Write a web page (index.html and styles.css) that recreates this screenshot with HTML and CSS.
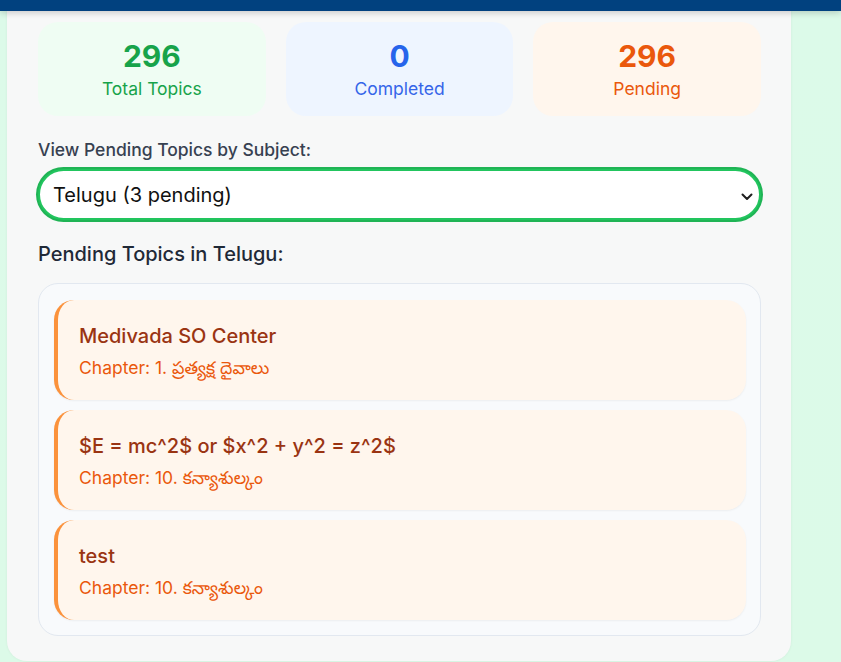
FILE: index.html
```html
<!DOCTYPE html>
<html lang="en">
<head>
<meta charset="utf-8">
<title>Pending Topics</title>
<link rel="stylesheet" href="styles.css">
</head>
<body>
<header class="topbar"></header>
<main class="panel">
  <section class="stats">
    <div class="stat stat-total">
      <div class="stat-num">296</div>
      <div class="stat-label">Total Topics</div>
    </div>
    <div class="stat stat-done">
      <div class="stat-num">0</div>
      <div class="stat-label">Completed</div>
    </div>
    <div class="stat stat-pending">
      <div class="stat-num">296</div>
      <div class="stat-label">Pending</div>
    </div>
  </section>

  <label class="field-label" for="subject">View Pending Topics by Subject:</label>
  <div class="select-wrap">
    <select id="subject" class="subject-select">
      <option>Telugu (3 pending)</option>
    </select>
    <svg class="chevron" width="12" height="8" viewBox="0 0 12 8"><path d="M1.5 1.5 L6 6 L10.5 1.5" fill="none" stroke="#1f1f1f" stroke-width="2" stroke-linecap="round" stroke-linejoin="round"/></svg>
  </div>

  <h2 class="section-title">Pending Topics in Telugu:</h2>

  <div class="topic-list">
    <div class="topic">
      <div class="topic-title">Medivada SO Center</div>
      <div class="topic-chapter">Chapter: 1. ప్రత్యక్ష దైవాలు</div>
    </div>
    <div class="topic">
      <div class="topic-title">$E = mc^2$ or $x^2 + y^2 = z^2$</div>
      <div class="topic-chapter">Chapter: 10. కన్యాశుల్కం</div>
    </div>
    <div class="topic">
      <div class="topic-title">test</div>
      <div class="topic-chapter">Chapter: 10. కన్యాశుల్కం</div>
    </div>
  </div>
</main>
</body>
</html>
```

FILE: styles.css
```css
* { box-sizing: border-box; }

html, body {
  margin: 0;
  padding: 0;
}

body {
  font-family: Inter, "Noto Sans", "Noto Sans Telugu", sans-serif;
  background: linear-gradient(180deg, #dcfae9 0%, #dcfae8 100%);
  min-height: 662px;
  overflow: hidden;
}

.topbar {
  height: 11px;
  background: #01417f;
  box-shadow: 0 2px 6px rgba(0, 0, 0, 0.18);
  position: relative;
  z-index: 2;
}

.panel {
  margin-left: 7px;
  width: 784px;
  background: #f7f8f8;
  border-radius: 0 0 20px 20px;
  padding: 11px 30px 25px 31px;
  box-shadow: 0 0 3px rgba(0, 0, 0, 0.06);
}

.stats {
  display: grid;
  grid-template-columns: repeat(3, 1fr);
  gap: 20px;
}

.stat {
  border-radius: 20px;
  padding: 16px 10px 15px;
  text-align: center;
  display: flex;
  flex-direction: column;
  gap: 3px;
}

.stat-num {
  font-size: 30px;
  line-height: 36px;
  font-weight: 700;
}

.stat-label {
  font-size: 17.5px;
  line-height: 24px;
}

.stat-total { background: #effdf3; color: #17a34a; }
.stat-done { background: #eef5ff; color: #2664eb; }
.stat-done .stat-label { color: #3565e9; }
.stat-pending { background: #fff6ed; color: #ea580c; }

.field-label {
  display: block;
  margin-top: 22px;
  font-size: 17.5px;
  line-height: 24px;
  font-weight: 500;
  color: #374151;
}

.select-wrap {
  position: relative;
  margin: 7px 0 0;
}

.subject-select {
  -webkit-appearance: none;
  appearance: none;
  display: block;
  width: 100%;
  height: 51px;
  margin: 2px 0;
  border: 2px solid #22c55e;
  box-shadow: 0 0 0 2px #1fb455;
  border-radius: 27px;
  background: #ffffff;
  font-family: Inter, "Noto Sans", sans-serif;
  font-size: 20px;
  color: #111111;
  padding: 0 40px 0 13px;
  outline: none;
}

.chevron {
  position: absolute;
  right: 8px;
  top: 24px;
}

.section-title {
  margin: 20px 0 0;
  font-size: 20px;
  line-height: 28px;
  font-weight: 500;
  color: #1f2937;
}

.topic-list {
  margin-top: 15px;
  border: 1px solid #e2e8f0;
  border-radius: 20px;
  background: #f8fafc;
  padding: 16px 14px 15px 15px;
  display: flex;
  flex-direction: column;
  gap: 10px;
}

.topic {
  height: 100px;
  background: #fff6ed;
  border-left: 4px solid #fb923c;
  border-radius: 20px;
  padding: 22px 20px 19px 21px;
  box-shadow: 0 1px 2px rgba(0, 0, 0, 0.05);
}

.topic-title {
  font-size: 20px;
  line-height: 28px;
  font-weight: 500;
  color: #9a3412;
}

.topic-chapter {
  margin-top: 6px;
  font-size: 17.5px;
  line-height: 24px;
  color: #ea580c;
}
```
